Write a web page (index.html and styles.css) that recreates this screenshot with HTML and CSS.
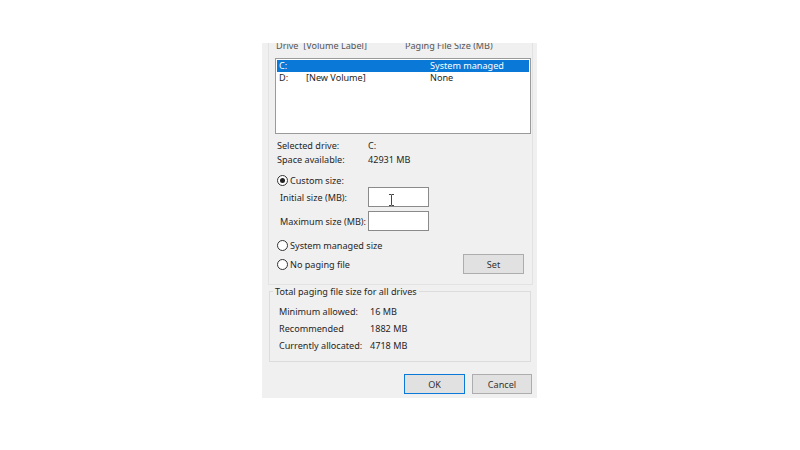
FILE: index.html
```html
<!DOCTYPE html>
<html>
<head>
<meta charset="utf-8">
<link rel="stylesheet" href="styles.css">
</head>
<body>
<div class="dialog">
  <div class="outer-group">
    <div class="list-head">
      <span class="col-drive">Drive&nbsp;&nbsp;[Volume Label]</span>
      <span class="col-size">Paging File Size (MB)</span>
    </div>
    <div class="listbox">
      <div class="row selected">
        <span class="c1">C:</span><span class="c2"></span><span class="c3">System managed</span>
      </div>
      <div class="row">
        <span class="c1">D:</span><span class="c2">[New Volume]</span><span class="c3">None</span>
      </div>
    </div>
    <div class="info">
      <div class="info-row"><span class="info-label">Selected drive:</span><span>C:</span></div>
      <div class="info-row"><span class="info-label">Space available:</span><span>42931 MB</span></div>
    </div>
    <div class="radio-row custom">
      <span class="radio checked"></span><span>Custom size:</span>
    </div>
    <div class="field-row">
      <span class="field-label">Initial size (MB):</span>
      <span class="input">
        <svg class="ibeam" width="7" height="12" viewBox="0 0 7 12"><path d="M1 0.5 H3 Q3.5 0.5 3.5 1.5 V10.5 Q3.5 11.5 3 11.5 H1 M6 0.5 H4 Q3.5 0.5 3.5 1.5 M3.5 10.5 Q3.5 11.5 4 11.5 H6" fill="none" stroke="#444" stroke-width="1"/></svg>
      </span>
    </div>
    <div class="field-row second">
      <span class="field-label">Maximum size (MB):</span>
      <span class="input"></span>
    </div>
    <div class="radio-row system">
      <span class="radio"></span><span>System managed size</span>
    </div>
    <div class="radio-row nopage">
      <span class="radio"></span><span>No paging file</span>
      <span class="btn set">Set</span>
    </div>
  </div>
  <div class="total-group">
    <div class="total-title">Total paging file size for all drives</div>
    <div class="total-rows">
      <div class="total-row"><span class="total-label">Minimum allowed:</span><span>16 MB</span></div>
      <div class="total-row"><span class="total-label">Recommended</span><span>1882 MB</span></div>
      <div class="total-row"><span class="total-label">Currently allocated:</span><span>4718 MB</span></div>
    </div>
  </div>
  <div class="buttons">
    <span class="btn ok">OK</span>
    <span class="btn cancel">Cancel</span>
  </div>
</div>
</body>
</html>
```
FILE: styles.css
```css
html, body {
  margin: 0;
  padding: 0;
  background: #ffffff;
}
body {
  font-family: "Noto Sans", "Open Sans", sans-serif;
  font-size: 9.1px;
  color: #262626;
  white-space: nowrap;
}
.dialog {
  margin: 43px 0 0 262px;
  width: 275px;
  height: 355px;
  background: #f0f0f0;
  overflow: hidden;
  box-sizing: border-box;
}
.outer-group {
  margin: 0 4px 0 6px;
  border: 1px solid #e2e2e2;
  border-top: none;
  padding: 0 0 10px 6px;
}
.list-head {
  margin-top: -4px;
  height: 14px;
  line-height: 14px;
  display: flex;
  color: #555;
  margin-bottom: 5px;
}
.col-drive {
  margin-left: 1px;
  width: 129px;
}
.listbox {
  width: 256px;
  height: 76px;
  box-sizing: border-box;
  border: 1px solid #9a9a9a;
  background: #ffffff;
  padding: 1px;
}
.row {
  height: 12px;
  line-height: 12px;
  display: flex;
}
.row.selected {
  background: #0a78d7;
  color: #ffffff;
}
.c1 {
  margin-left: 2px;
  width: 27px;
}
.c2 {
  width: 124px;
}
.info {
  margin-top: 5px;
}
.info-row {
  display: flex;
  height: 14px;
  line-height: 14px;
  margin-left: 2px;
}
.info-label {
  width: 91px;
}
.radio-row {
  display: flex;
  align-items: center;
  height: 14px;
  margin-left: 2px;
}
.radio {
  flex-shrink: 0;
  width: 9px;
  height: 9px;
  border: 1px solid #333;
  border-radius: 50%;
  background: #ffffff;
  margin-right: 2px;
  box-sizing: content-box;
  display: flex;
  align-items: center;
  justify-content: center;
}
.radio.checked::after {
  content: "";
  width: 5px;
  height: 5px;
  border-radius: 50%;
  background: #222;
}
.custom {
  margin-top: 6px;
}
.field-row {
  display: flex;
  align-items: center;
  height: 20px;
  margin-left: 5px;
}
.field-row.second {
  margin-top: 4px;
}
.field-label {
  flex-shrink: 0;
  width: 88px;
}
.input {
  flex-shrink: 0;
  position: relative;
  width: 61px;
  height: 20px;
  box-sizing: border-box;
  border: 1px solid #8a8a8a;
  background: #ffffff;
}
.ibeam {
  position: absolute;
  left: 19px;
  top: 6px;
}
.system {
  margin-top: 7px;
}
.nopage {
  margin-top: 2px;
  height: 20px;
}
.btn {
  display: flex;
  align-items: center;
  justify-content: center;
  box-sizing: border-box;
  height: 20px;
  background: #e1e1e1;
  border: 1px solid #adadad;
  color: #333;
}
.set {
  margin-left: auto;
  margin-right: 8px;
  width: 61px;
}
.total-group {
  margin: 6px 6px 0 7px;
  border: 1px solid #dcdcdc;
  padding: 0 0 7px 0;
}
.total-title {
  width: fit-content;
  margin: -7px 0 0 3px;
  padding: 0 2px;
  height: 14px;
  line-height: 14px;
  background: #f0f0f0;
}
.total-rows {
  margin-top: 4px;
}
.total-row {
  display: flex;
  line-height: 17px;
  margin-left: 9px;
}
.total-label {
  width: 91px;
}
.buttons {
  display: flex;
  justify-content: flex-end;
  gap: 7px;
  margin-top: 12px;
  padding-right: 5px;
}
.ok {
  width: 61px;
  border-color: #0a78d7;
}
.cancel {
  width: 60px;
}
```
